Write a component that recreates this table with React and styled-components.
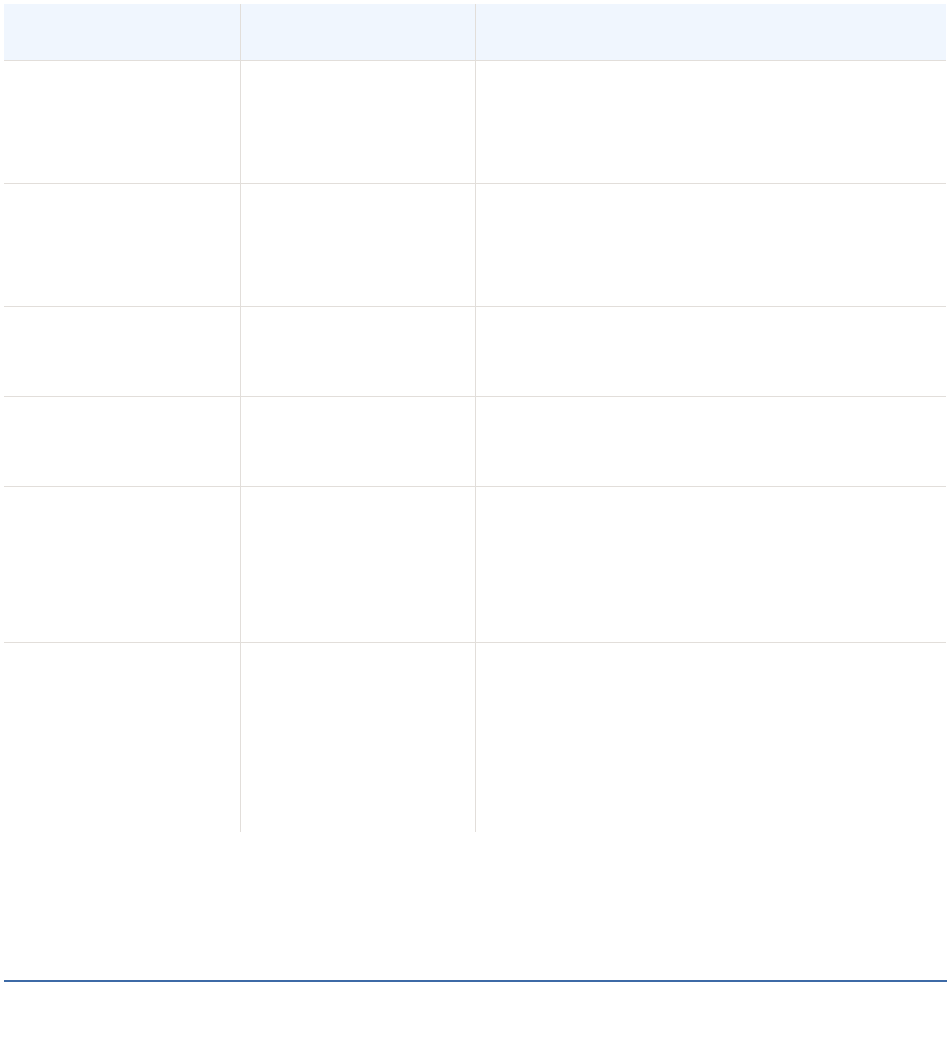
import styled, { createGlobalStyle } from "styled-components";

const GlobalStyle = createGlobalStyle`
    body {
        margin: 0;
        background: #ffffff;
        font-family: "Liberation Sans", Arial, sans-serif;
    }
`

const Page = styled.div`
    padding: 4px 3px 0 4px;
    box-sizing: border-box;
    width: 950px;
`

const Table = styled.div`
    width: 942px;
    display: flex;
    flex-direction: column;
`

const Row = styled.div`
    display: grid;
    grid-template-columns: 236px 235px 1fr;
    height: ${(p) => p.$h}px;
    box-sizing: border-box;
    background: ${(p) => (p.$head ? "#f0f6fe" : "#ffffff")};
    border-bottom: ${(p) => (p.$last ? "none" : "1px solid #e2deda")};
`

const Cell = styled.div`
    border-left: ${(p) => (p.$first ? "none" : "1px solid #e2deda")};
`

const Rule = styled.hr`
    margin: 148px 0 0 0;
    border: none;
    height: 2px;
    background: #3d6aa6;
    width: 943px;
`

const rows = [57, 123, 123, 90, 90, 156, 189]

export default function App() {
    return (
        <>
            <GlobalStyle />
            <Page>
                <Table>
                    {rows.map((h, i) => (
                        <Row key={i} $h={h} $head={i === 0} $last={i === rows.length - 1}>
                            <Cell $first />
                            <Cell />
                            <Cell />
                        </Row>
                    ))}
                </Table>
                <Rule />
            </Page>
        </>
    )
}
